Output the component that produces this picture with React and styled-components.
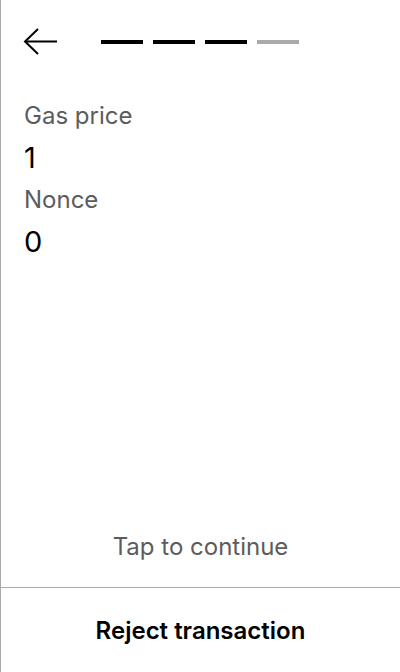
import React from "react";
import styled, { createGlobalStyle } from "styled-components";

const Global = createGlobalStyle`
  html, body { margin: 0; padding: 0; background: #fff; }
  body { font-family: Inter, "Noto Sans", sans-serif; }
  * { box-sizing: border-box; }
`;

const Screen = styled.div`
  width: 400px;
  height: 672px;
  border-left: 1px solid #aaaaaa;
  display: flex;
  flex-direction: column;
  background: #fff;
`;

const Header = styled.div`
  display: flex;
  align-items: center;
  height: 86px;
  padding: 0 0 0 22px;
  gap: 42px;
`;

const BackButton = styled.button`
  border: none;
  background: none;
  padding: 0;
  width: 36px;
  height: 30px;
  display: flex;
  align-items: center;
  cursor: pointer;
`;

const Steps = styled.div`
  display: flex;
  gap: 10px;
  margin-top: -3px;
`;

const Step = styled.div`
  width: 42px;
  height: 4px;
  background: ${(p) => (p.$done ? "#000" : "#aaaaaa")};
`;

const Content = styled.div`
  flex: 1;
  padding: 12px 23px 0;
  display: flex;
  flex-direction: column;
`;

const Label = styled.div`
  font-size: 24px;
  line-height: 36px;
  color: #5c5c5c;
`;

const Value = styled.div`
  font-size: 29px;
  line-height: 48px;
  color: #000;
`;

const Hint = styled.div`
  text-align: center;
  font-size: 24px;
  line-height: 30px;
  color: #5c5c5c;
  padding-bottom: 25px;
`;

const Divider = styled.div`
  height: 1px;
  background: #aaaaaa;
`;

const RejectButton = styled.button`
  border: none;
  background: none;
  height: 84px;
  width: 100%;
  padding: 0;
  font-family: Inter, "Noto Sans", sans-serif;
  font-size: 24px;
  font-weight: 600;
  color: #000;
  cursor: pointer;
`;

function ArrowLeft() {
  return (
    <svg width="36" height="30" viewBox="0 0 36 30" fill="none">
      <path d="M34 13.5H3" stroke="#000" strokeWidth="2" />
      <path d="M15 1L2 13.5L15 26" stroke="#000" strokeWidth="2" />
    </svg>
  );
}

export default function App() {
  return (
    <>
      <Global />
      <Screen>
        <Header>
          <BackButton aria-label="Back">
            <ArrowLeft />
          </BackButton>
          <Steps>
            <Step $done />
            <Step $done />
            <Step $done />
            <Step />
          </Steps>
        </Header>
        <Content>
          <Label>Gas price</Label>
          <Value>1</Value>
          <Label>Nonce</Label>
          <Value>0</Value>
        </Content>
        <Hint>Tap to continue</Hint>
        <Divider />
        <RejectButton>Reject transaction</RejectButton>
      </Screen>
    </>
  );
}
